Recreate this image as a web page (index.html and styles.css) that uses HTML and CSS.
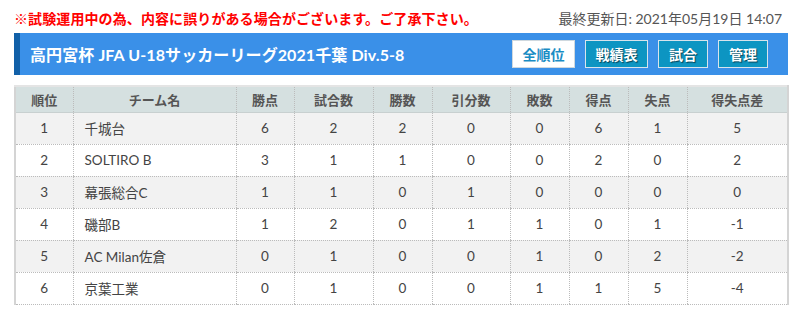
FILE: index.html
```html
<!DOCTYPE html>
<html lang="ja">
<head>
<meta charset="utf-8">
<link rel="stylesheet" href="styles.css">
</head>
<body>
<div class="page">
  <div class="topline">
    <span class="notice">※試験運用中の為、内容に誤りがある場合がございます。ご了承下さい。</span>
    <span class="updated">最終更新日: 2021年05月19日 14:07</span>
  </div>
  <div class="titlebar">
    <h1 class="title">高円宮杯 JFA U-18サッカーリーグ2021千葉 Div.5-8</h1>
    <div class="btns">
      <span class="btn active w3">全順位</span>
      <span class="btn w3">戦績表</span>
      <span class="btn w2">試合</span>
      <span class="btn w2">管理</span>
    </div>
  </div>
  <table class="standings">
    <colgroup>
      <col class="c1"><col class="c2"><col class="c3"><col class="c4"><col class="c5">
      <col class="c6"><col class="c7"><col class="c8"><col class="c9"><col class="c10">
    </colgroup>
    <thead>
      <tr><th>順位</th><th>チーム名</th><th>勝点</th><th>試合数</th><th>勝数</th><th>引分数</th><th>敗数</th><th>得点</th><th>失点</th><th>得失点差</th></tr>
    </thead>
    <tbody>
      <tr><td>1</td><td class="team">千城台</td><td>6</td><td>2</td><td>2</td><td>0</td><td>0</td><td>6</td><td>1</td><td>5</td></tr>
      <tr><td>2</td><td class="team">SOLTIRO B</td><td>3</td><td>1</td><td>1</td><td>0</td><td>0</td><td>2</td><td>0</td><td>2</td></tr>
      <tr><td>3</td><td class="team">幕張総合C</td><td>1</td><td>1</td><td>0</td><td>1</td><td>0</td><td>0</td><td>0</td><td>0</td></tr>
      <tr><td>4</td><td class="team">磯部B</td><td>1</td><td>2</td><td>0</td><td>1</td><td>1</td><td>0</td><td>1</td><td>-1</td></tr>
      <tr><td>5</td><td class="team">AC Milan佐倉</td><td>0</td><td>1</td><td>0</td><td>0</td><td>1</td><td>0</td><td>2</td><td>-2</td></tr>
      <tr><td>6</td><td class="team">京葉工業</td><td>0</td><td>1</td><td>0</td><td>0</td><td>1</td><td>1</td><td>5</td><td>-4</td></tr>
    </tbody>
  </table>
</div>
</body>
</html>
```

FILE: styles.css
```css
* { box-sizing: border-box; }
body {
  margin: 0;
  background: #fff;
  font-family: "Lato", "Noto Sans CJK JP", sans-serif;
  color: #444;
}
.page {
  padding: 9px 11px 0 14px;
  width: 799px;
}
.topline {
  display: flex;
  justify-content: space-between;
  align-items: center;
  height: 18px;
  padding-right: 6px;
}
.notice {
  color: #ff0000;
  font-weight: bold;
  font-size: 14px;
  letter-spacing: 0.1px;
}
.updated {
  color: #555;
  font-size: 14px;
}
.titlebar {
  margin-top: 6px;
  height: 42px;
  width: 774px;
  background: #3a90e8;
  border-left: 6px solid #1160a8;
  display: flex;
  align-items: center;
  justify-content: space-between;
  padding: 0 20px 0 10px;
}
.title {
  margin: 0;
  font-size: 16px;
  font-weight: bold;
  color: #fff;
  letter-spacing: 0.1px;
}
.btns {
  display: flex;
  gap: 10px;
}
.btn {
  display: flex;
  align-items: center;
  justify-content: center;
  height: 28px;
  background: #0d95c2;
  border: 1px solid #d8e4ec;
  color: #fff;
  font-weight: bold;
  font-size: 14px;
  text-shadow: 1px 1px 1px rgba(0,0,0,0.55);
}
.btn.w3 { width: 63px; }
.btn.w2 { width: 50px; }
.btn.active {
  background: #fff;
  color: #1a8cc4;
  border-color: #cfd8de;
  text-shadow: none;
}
.standings {
  margin-top: 10px;
  width: 773px;
  border-collapse: collapse;
  table-layout: fixed;
  font-size: 13px;
  border-left: 2px solid #d4d4d4;
  border-right: 2px solid #d4d4d4;
  border-top: 2px solid #e4e4e4;
}
.c1 { width: 58px; }
.c2 { width: 163px; }
.c3 { width: 58px; }
.c4 { width: 79px; }
.c5 { width: 59px; }
.c6 { width: 78px; }
.c7 { width: 59px; }
.c8 { width: 59px; }
.c9 { width: 59px; }
.c10 { width: 101px; }
.standings th {
  background: #d5e0e0;
  color: #555;
  font-weight: bold;
  height: 26px;
  padding: 0;
  text-align: center;
  border-left: 1px dotted #bbb;
  border-bottom: 1px solid #c8d0d0;
}
.standings td {
  height: 32px;
  padding: 0;
  text-align: center;
  border-left: 1px dotted #bbb;
  border-bottom: 1px dotted #bbb;
  color: #444;
  font-size: 13.5px;
}
.standings th:first-child, .standings td:first-child { border-left: none; }
.standings td.team {
  text-align: left;
  padding-left: 11px;
}
.standings tbody tr:nth-child(odd) td { background: #f2f2f2; }
.standings tbody tr:nth-child(even) td { background: #fff; }
```
